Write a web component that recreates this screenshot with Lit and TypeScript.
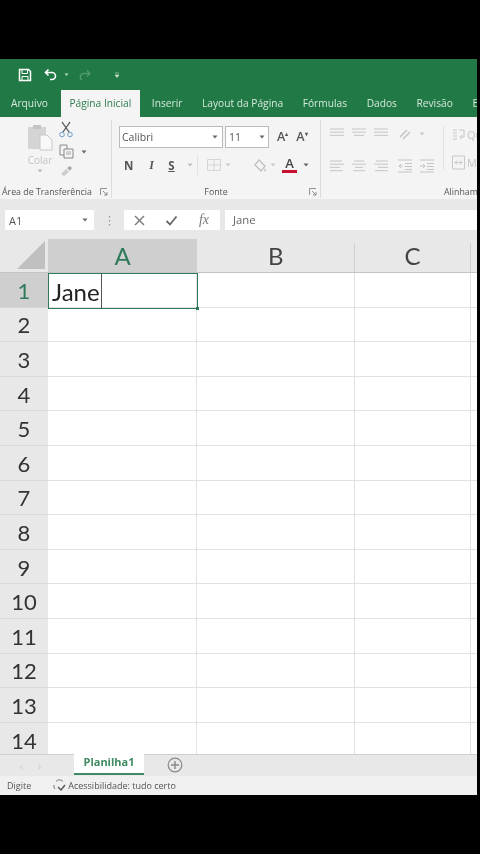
import { LitElement, html, css, svg } from "lit";
import { customElement } from "lit/decorators.js";

const ic = (w: number, h: number, body: unknown, cls = "") =>
  html`<svg class=${cls} width=${w} height=${h} viewBox="0 0 ${w} ${h}" fill="none">${body}</svg>`;

const caret = html`<svg class="caret" width="6" height="4" viewBox="0 0 6 4"><path d="M.5.5h5L3 3.5z" fill="#666"/></svg>`;
const paleCaret = html`<svg class="caret" width="6" height="4" viewBox="0 0 6 4"><path d="M.5.5h5L3 3.5z" fill="#bbb"/></svg>`;

const lines = (rows: number[][], c = "#cdcdcd") =>
  ic(16, 14, rows.map((r, i) => svg`<path d="M${r[0]} ${2 + i * 3.2}H${r[1]}" stroke=${c} stroke-width="1.2"/>`));

const launcher = ic(8, 8, svg`<path d="M.5 7V.5H7M3 3l4 4M7 4v3H4" stroke="#777" stroke-width=".8"/>`, "launch");
const rows = Array.from({ length: 14 }, (_, i) => i + 1);

@customElement("app-root")
export class AppRoot extends LitElement {
  static styles = css`
    :host { display: block; width: 480px; height: 854px; background: #000; overflow: hidden;
      font-family: "Open Sans", "Noto Sans", sans-serif; color: #444; }
    .app { margin-top: 59px; width: 477px; height: 736px; display: flex; flex-direction: column; background: #fff; overflow: hidden; filter: blur(.4px); }
    .qat { height: 31px; background: #217a45; display: flex; align-items: center; padding-left: 18px; flex: none; }
    .qat svg { flex: none; }
    .qat .undo { margin-left: 12px; }
    .qat .dd { margin-left: 6px; }
    .qat .redo { margin-left: 9px; }
    .qat .more { margin-left: 23px; }
    .tabs { height: 27px; background: #217a45; display: flex; align-items: flex-end; flex: none; font-size: 10.2px; color: #d5e8dc; white-space: nowrap; padding-left: 11px; gap: 19.6px; overflow: hidden; }
    .tab { height: 27px; line-height: 26px; }
    .tab.on { background: #f4f4f4; color: #2c7a4d; padding: 0 9px 0 8px; margin: 0 -8px 0 -6px; }
    .ribbon { height: 82px; background: #f4f4f4; display: flex; flex: none; font-size: 9.5px; color: #666; overflow: hidden; }
    .grp { display: flex; flex-direction: column; border-right: 1px solid #dcdcdc; flex: none; margin: 3px 0 1px; position: relative; }
    .grp-body { flex: 1; min-height: 0; display: flex; }
    .grp-label { height: 15px; line-height: 19px; text-align: center; white-space: nowrap; color: #555; font-size: 8.8px; }
    .launch { position: absolute; right: 3px; bottom: 2px; }
    .clip { width: 111px; }
    .clip .grp-label { text-align: left; padding-left: 2px; }
    .clip .grp-body { padding-left: 27px; gap: 6px; }
    .paste { display: flex; flex-direction: column; align-items: center; width: 26px; color: #c4c4c4; font-size: 10px; padding-top: 3px; }
    .paste span { margin-top: 3px; line-height: 13px; }
    .paste .caret { margin-top: 2px; }
    .clip-tools { display: flex; flex-direction: column; gap: 6px; padding-top: 1px; }
    .tool-row { display: flex; align-items: center; gap: 7px; }
    .font { width: 208px; }
    .font .grp-body { flex-direction: column; padding: 6px 0 0 7px; gap: 8px; }
    .row { display: flex; align-items: center; }
    .combo { height: 20px; background: #fff; border: 1px solid #bbb; display: flex; align-items: center; justify-content: space-between; padding: 0 4px 0 2px; font-size: 10.5px; color: #555; box-sizing: content-box; }
    .combo.name { width: 96px; }
    .combo.size { width: 36px; margin-left: 2px; padding-left: 3px; padding-right: 3px; }
    .grow { font-size: 12.5px; color: #555; margin-left: 8px; font-weight: 600; line-height: 14px; }
    .grow sup { font-size: 6px; vertical-align: 5px; line-height: 0; }
    .row2 { height: 18px; padding-left: 4px; }
    .fmt { font-family: "Liberation Serif", serif; font-size: 12px; font-weight: 700; font-style: italic; color: #555; width: 21px; text-align: center; box-sizing: border-box; }
    .fmt.b { font-family: "Open Sans", sans-serif; font-size: 11.5px; font-style: normal; width: 18px; text-align: left; padding-left: 1px; }
    .fmt.s { font-family: "Open Sans", sans-serif; font-size: 11.5px; font-style: normal; text-decoration: underline; width: 19px; }
    .row2 .caret { margin-left: 3px; }
    .row2 .fmt.s + .caret { margin-left: 6px; }
    .sep { width: 1px; height: 20px; background: #e2e2e2; margin: 0 8px 0 4px; }
    .gap-border { width: 3px; }
    .gap-bucket { width: 22px; }
    .gap-c { width: 2px; }
    .fcolor { display: flex; flex-direction: column; align-items: center; width: 15px; font-size: 13px; font-weight: 600; line-height: 13px; color: #444; margin: 0 3px 0 6px; }
    .fcolor i { display: block; width: 15px; height: 3px; background: #c8102e; margin-top: 0; }
    .align { flex: 1; min-width: 0; border-right: 0; }
    .align .grp-body { gap: 8px; padding: 6px 0 0 8px; min-width: 0; }
    .al-col { display: flex; flex-direction: column; gap: 16px; flex: none; }
    .al-row { display: flex; align-items: center; gap: 6px; height: 16px; }
    .wrap { color: #c6c6c6; font-size: 11px; white-space: nowrap; border-left: 1px solid #e2e2e2; padding-left: 8px; height: 44px; display: flex; flex-direction: column; align-items: flex-start; gap: 12px; }
    .wrap div { display: flex; align-items: center; gap: 2px; height: 16px; }
    .align .grp-label { text-align: left; padding-left: 123px; overflow: hidden; }
    .fbar { height: 40px; background: #e8e8e8; display: flex; align-items: center; flex: none; padding: 2px 0 0 5px; box-sizing: border-box; }
    .namebox { width: 89px; height: 20px; background: #fff; display: flex; align-items: center; justify-content: space-between; padding: 0 6px 0 4px; box-sizing: border-box; font-size: 11px; color: #555; border-radius: 1px; }
    .dots { width: 30px; display: flex; justify-content: center; }
    .fx { width: 96px; height: 20px; background: #fff; display: flex; align-items: center; justify-content: space-between; padding: 0 11px 0 10px; box-sizing: border-box; margin-right: 5px; }
    .fxi { font-family: "Liberation Serif", serif; font-style: italic; font-size: 14px; color: #777; }
    .input { flex: 1; height: 20px; background: #fff; font-size: 11.3px; color: #666; line-height: 20px; padding-left: 8px; }
    .heads { height: 34px; background: #e8e8e8; display: grid; grid-template-columns: 48px 149px 157.5px 116px 6.500px; grid-template-rows: 33px; flex: none; border-bottom: 1px solid #c4c4c4; box-sizing: border-box; font-family: Lato, "Open Sans", sans-serif; font-size: 24px; color: #444; }
    .corner { display: flex; align-items: flex-end; justify-content: flex-end; padding: 0 2px 3px 0; }
    .h { display: flex; align-items: center; justify-content: center; padding-bottom: 1px; box-sizing: border-box; position: relative; }
    .h.b::after { content: ""; position: absolute; right: 0; top: 4px; bottom: 0; width: 1px; background: #cfcfcf; }
    .h.a { background: #cfcfcf; color: #2f7a58; }
    .sheet { flex: 1; min-height: 0; display: grid; grid-template-columns: 48px 1fr; overflow: hidden; position: relative; }
    .rh { background: #e8e8e8; }
    .rn { height: 34.6px; box-sizing: border-box; border-bottom: 1px solid #d8d8d8; padding-top: 1px; display: flex; align-items: center; justify-content: center; font-family: Lato, "Open Sans", sans-serif; font-size: 22px; color: #333; }
    .rn.on { background: #cfcfcf; color: #2f7a58; }
    .cells { display: block; overflow: hidden; }
    .line { height: 34.6px; box-sizing: border-box; border-bottom: 1px solid #e2e2e2; display: grid; grid-template-columns: 149px 157.5px 116px; }
    .c { border-right: 1px solid #e2e2e2; }
    .sel { position: absolute; left: 48px; top: 0; width: 150px; height: 36px; box-sizing: border-box; border: 1.5px solid #2f7a58; font-family: Lato, "Open Sans", sans-serif; font-size: 24px; color: #222; padding-left: 3px; display: flex; align-items: stretch; }
    .sel::after { content: ""; position: absolute; right: -2px; bottom: -2px; width: 3px; height: 3px; background: #2f7a58; }
    .sel b { font-weight: 400; border-right: 1px solid #555; display: flex; align-items: center; padding-right: 1px; }
    .tabsbar { height: 22px; background: #e8e8e8; border-top: 1px solid #d0d0d0; box-sizing: border-box; display: flex; align-items: stretch; flex: none; }
    .nav { width: 74px; display: flex; align-items: center; gap: 15px; color: #c8c8c8; font-size: 10px; padding-left: 20px; box-sizing: border-box; }
    .sh { width: 70px; background: #fff; border-bottom: 2px solid #3f8a63; color: #3f8a63; font-weight: 700; font-size: 11px; text-align: center; line-height: 16px; box-sizing: border-box; margin-top: -1px; height: 21px; }
    .plus { margin: 2px 0 0 23px; }
    .status { height: 19px; background: #f0f0f0; display: flex; align-items: center; font-size: 9px; color: #555; padding-left: 7px; flex: none; }
    .acc { margin-left: 21px; display: flex; align-items: center; gap: 1px; }
  `;

  render() {
    return html`<div class="app">
      <div class="qat">
        ${ic(14, 14, svg`<path d="M1.500 1.500h9l2 2v9h-11z" stroke="#fff" stroke-width="1.500"/><path d="M4 2v3.500h5.500V2M4 12.500V8.500h6v4" stroke="#fff"/>`)}
        ${ic(14, 13, svg`<path d="M4.500 1.500 1.500 4.500l3 3" stroke="#fff" stroke-width="1.600"/><path d="M2 4.500h6a3.500 3.500 0 0 1 0 7H6" stroke="#fff" stroke-width="1.600"/>`, "undo")}
        ${ic(5, 4, svg`<path d="M.5.5h4L2.500 3z" fill="#b7d5c3"/>`, "dd")}
        ${ic(13, 12, svg`<path d="M9 1.500l3 3-3 3M12 4.500H6a3.500 3.500 0 0 0-2 6.500" stroke="#4f9a6d" stroke-width="1.400"/>`, "redo")}
        ${ic(6, 6, svg`<path d="M1 1h4M1 3h4L3 5.500z" fill="#cfe3d7" stroke="#cfe3d7" stroke-width=".6"/>`, "more")}
      </div>
      <div class="tabs">
        <span class="tab">Arquivo</span><span class="tab on">Página Inicial</span><span class="tab">Inserir</span><span class="tab">Layout da Página</span><span class="tab">Fórmulas</span><span class="tab">Dados</span><span class="tab">Revisão</span><span class="tab">Exibir</span>
      </div>
      <div class="ribbon">
        <div class="grp clip">
          <div class="grp-body">
            <div class="paste">
              ${ic(26, 28, svg`<path d="M1 4h18v22H1z" fill="#d4d4d4"/><path d="M6 2h8v4H6z" fill="#c4c4c4"/><path d="M13 12h7l5 5v10H13z" fill="#f8f8f8" stroke="#c8c8c8"/>`)}
              <span>Colar</span>${paleCaret}
            </div>
            <div class="clip-tools">
              ${ic(14, 17, svg`<path d="M3 1l7 10M11 1 4 11" stroke="#555" stroke-width="1.300"/><circle cx="3" cy="13.500" r="2.300" stroke="#6f9fc8"/><circle cx="11" cy="13.500" r="2.300" stroke="#6f9fc8"/>`)}
              <div class="tool-row">
                ${ic(15, 15, svg`<path d="M1 1h7v10H1z" fill="#f4f4f4" stroke="#888"/><path d="M5 5h9v9H5z" fill="#f4f4f4" stroke="#888"/><path d="M7 8h5M7 10h5" stroke="#aaa"/>`)}
                ${caret}
              </div>
              ${ic(14, 12, svg`<path d="M2 9l5-5 3 3-5 4z" fill="#ccc"/><path d="M8 3l3-2 2 2-2 3z" fill="#aaa"/>`)}
            </div>
          </div>
          <div class="grp-label">Área de Transferência</div>
          ${launcher}
        </div>
        <div class="grp font">
          <div class="grp-body">
            <div class="row">
              <div class="combo name"><span>Calibri</span>${caret}</div>
              <div class="combo size"><span>11</span>${caret}</div>
              <span class="grow">A<sup>▴</sup></span><span class="grow">A<sup>▾</sup></span>
            </div>
            <div class="row row2">
              <span class="fmt b">N</span><span class="fmt">I</span><span class="fmt s">S</span>${paleCaret}
              <span class="sep"></span>
              ${ic(16, 14, svg`<path d="M1.500 1.500h13v11h-13zM8 1.500v11M1.500 7h13" stroke="#d6d6d6"/>`)}
              <span class="gap-border"></span>${ic(6, 4, svg`<path d="M.5.5h5L3 3.500z" fill="#ccc"/>`)}
              <span class="gap-bucket"></span>
              ${ic(15, 15, svg`<path d="M6 2l6 6-4 5-6-6z" stroke="#bbb" stroke-width="1.200"/><path d="M12 10c1.500 2 1.500 3.500 0 3.500s-1.500-1.500 0-3.500z" fill="#ccc"/>`)}
              <span class="gap-c"></span>${ic(6, 4, svg`<path d="M.5.5h5L3 3.500z" fill="#ccc"/>`)}
              <div class="fcolor">A<i></i></div>${caret}
            </div>
          </div>
          <div class="grp-label">Fonte</div>
          ${launcher}
        </div>
        <div class="grp align">
          <div class="grp-body">
            <div class="al-col">
              <div class="al-row">${lines([[1, 15], [1, 15], [1, 15]])}${lines([[1, 15], [1, 15], [3, 13]])}${lines([[1, 15], [1, 15], [1, 15]])}</div>
              <div class="al-row">${lines([[1, 13], [1, 15], [1, 11], [1, 14]])}${lines([[3, 13], [1, 15], [4, 12], [2, 14]])}${lines([[3, 15], [1, 15], [5, 15], [2, 15]])}</div>
            </div>
            <div class="al-col">
              <div class="al-row">${ic(16, 14, svg`<path d="M3 10 10 3M6 12l7-7" stroke="#c4c4c4" stroke-width="1.500"/>`)}${ic(6, 4, svg`<path d="M.5.5h5L3 3.500z" fill="#ccc"/>`)}</div>
              <div class="al-row">${ic(16, 14, svg`<path d="M1 1h14M8 4.500h7M8 7.500h7M8 10.500h7M1 13h14M6 7H2m2-2L2 7l2 2" stroke="#c4c4c4"/>`)}${ic(16, 14, svg`<path d="M1 1h14M8 4.500h7M8 7.500h7M8 10.500h7M1 13h14M1 7h5M4 5l2 2-2 2" stroke="#c4c4c4"/>`)}</div>
            </div>
            <div class="wrap">
              <div>${ic(13, 15, svg`<path d="M1 3h4M1 6h4M1 9h4M1 12h4M7 3h5v7H8M8 10l2-2M8 10l2 2" stroke="#c8c8c8"/>`)}Quebrar</div>
              <div>${ic(13, 15, svg`<path d="M.5 1h12v13H.5zM3 7.500h7M3 7.500l2-2M3 7.500l2 2M10 7.500l-2-2M10 7.500l-2 2" stroke="#c8c8c8"/>`)}Mesclar</div>
            </div>
          </div>
          <div class="grp-label">Alinhamento</div>
        </div>
      </div>
      <div class="fbar">
        <div class="namebox"><span>A1</span>${caret}</div>
        <div class="dots">${ic(3, 11, svg`<path d="M1.500 1v1.500M1.500 5v1.500M1.500 9v1.500" stroke="#999" stroke-width="1.300"/>`)}</div>
        <div class="fx">
          ${ic(11, 11, svg`<path d="M1 1l9 9M10 1 1 10" stroke="#777" stroke-width="1.400"/>`)}
          ${ic(13, 11, svg`<path d="M1.500 6l3.500 3.500L11.500 1.500" stroke="#666" stroke-width="1.800"/>`)}
          <span class="fxi">fx</span>
        </div>
        <div class="input">Jane</div>
      </div>
      <div class="heads">
        <div class="corner">${ic(29, 28, svg`<path d="M28 0v28H0z" fill="#c0c0c0"/>`)}</div>
        <div class="h a">A</div><div class="h b">B</div><div class="h b">C</div><div class="h"></div>
      </div>
      <div class="sheet">
        <div class="rh">${rows.map((n) => html`<div class="rn ${n === 1 ? "on" : ""}">${n}</div>`)}</div>
        <div class="cells">${rows.map(() => html`<div class="line"><div class="c"></div><div class="c"></div><div class="c"></div></div>`)}</div>
        <div class="sel"><b>Jane</b></div>
      </div>
      <div class="tabsbar">
        <div class="nav"><span>‹</span><span>›</span></div>
        <div class="sh">Planilha1</div>
        ${ic(16, 16, svg`<circle cx="8" cy="8" r="6.800" stroke="#888" stroke-width="1.200"/><path d="M8 4v8M4 8h8" stroke="#888" stroke-width="1.400"/>`, "plus")}
      </div>
      <div class="status">
        <span>Digite</span>
        <span class="acc">${ic(15, 13, svg`<path d="M4 2.500a4.500 4.500 0 0 1 7 0M2 6a4 4 0 0 0 1 4" stroke="#777"/><path d="M6 8l3 3 4-5" stroke="#555" stroke-width="1.400"/>`)}Acessibilidade: tudo certo</span>
      </div>
    </div>`;
  }
}
